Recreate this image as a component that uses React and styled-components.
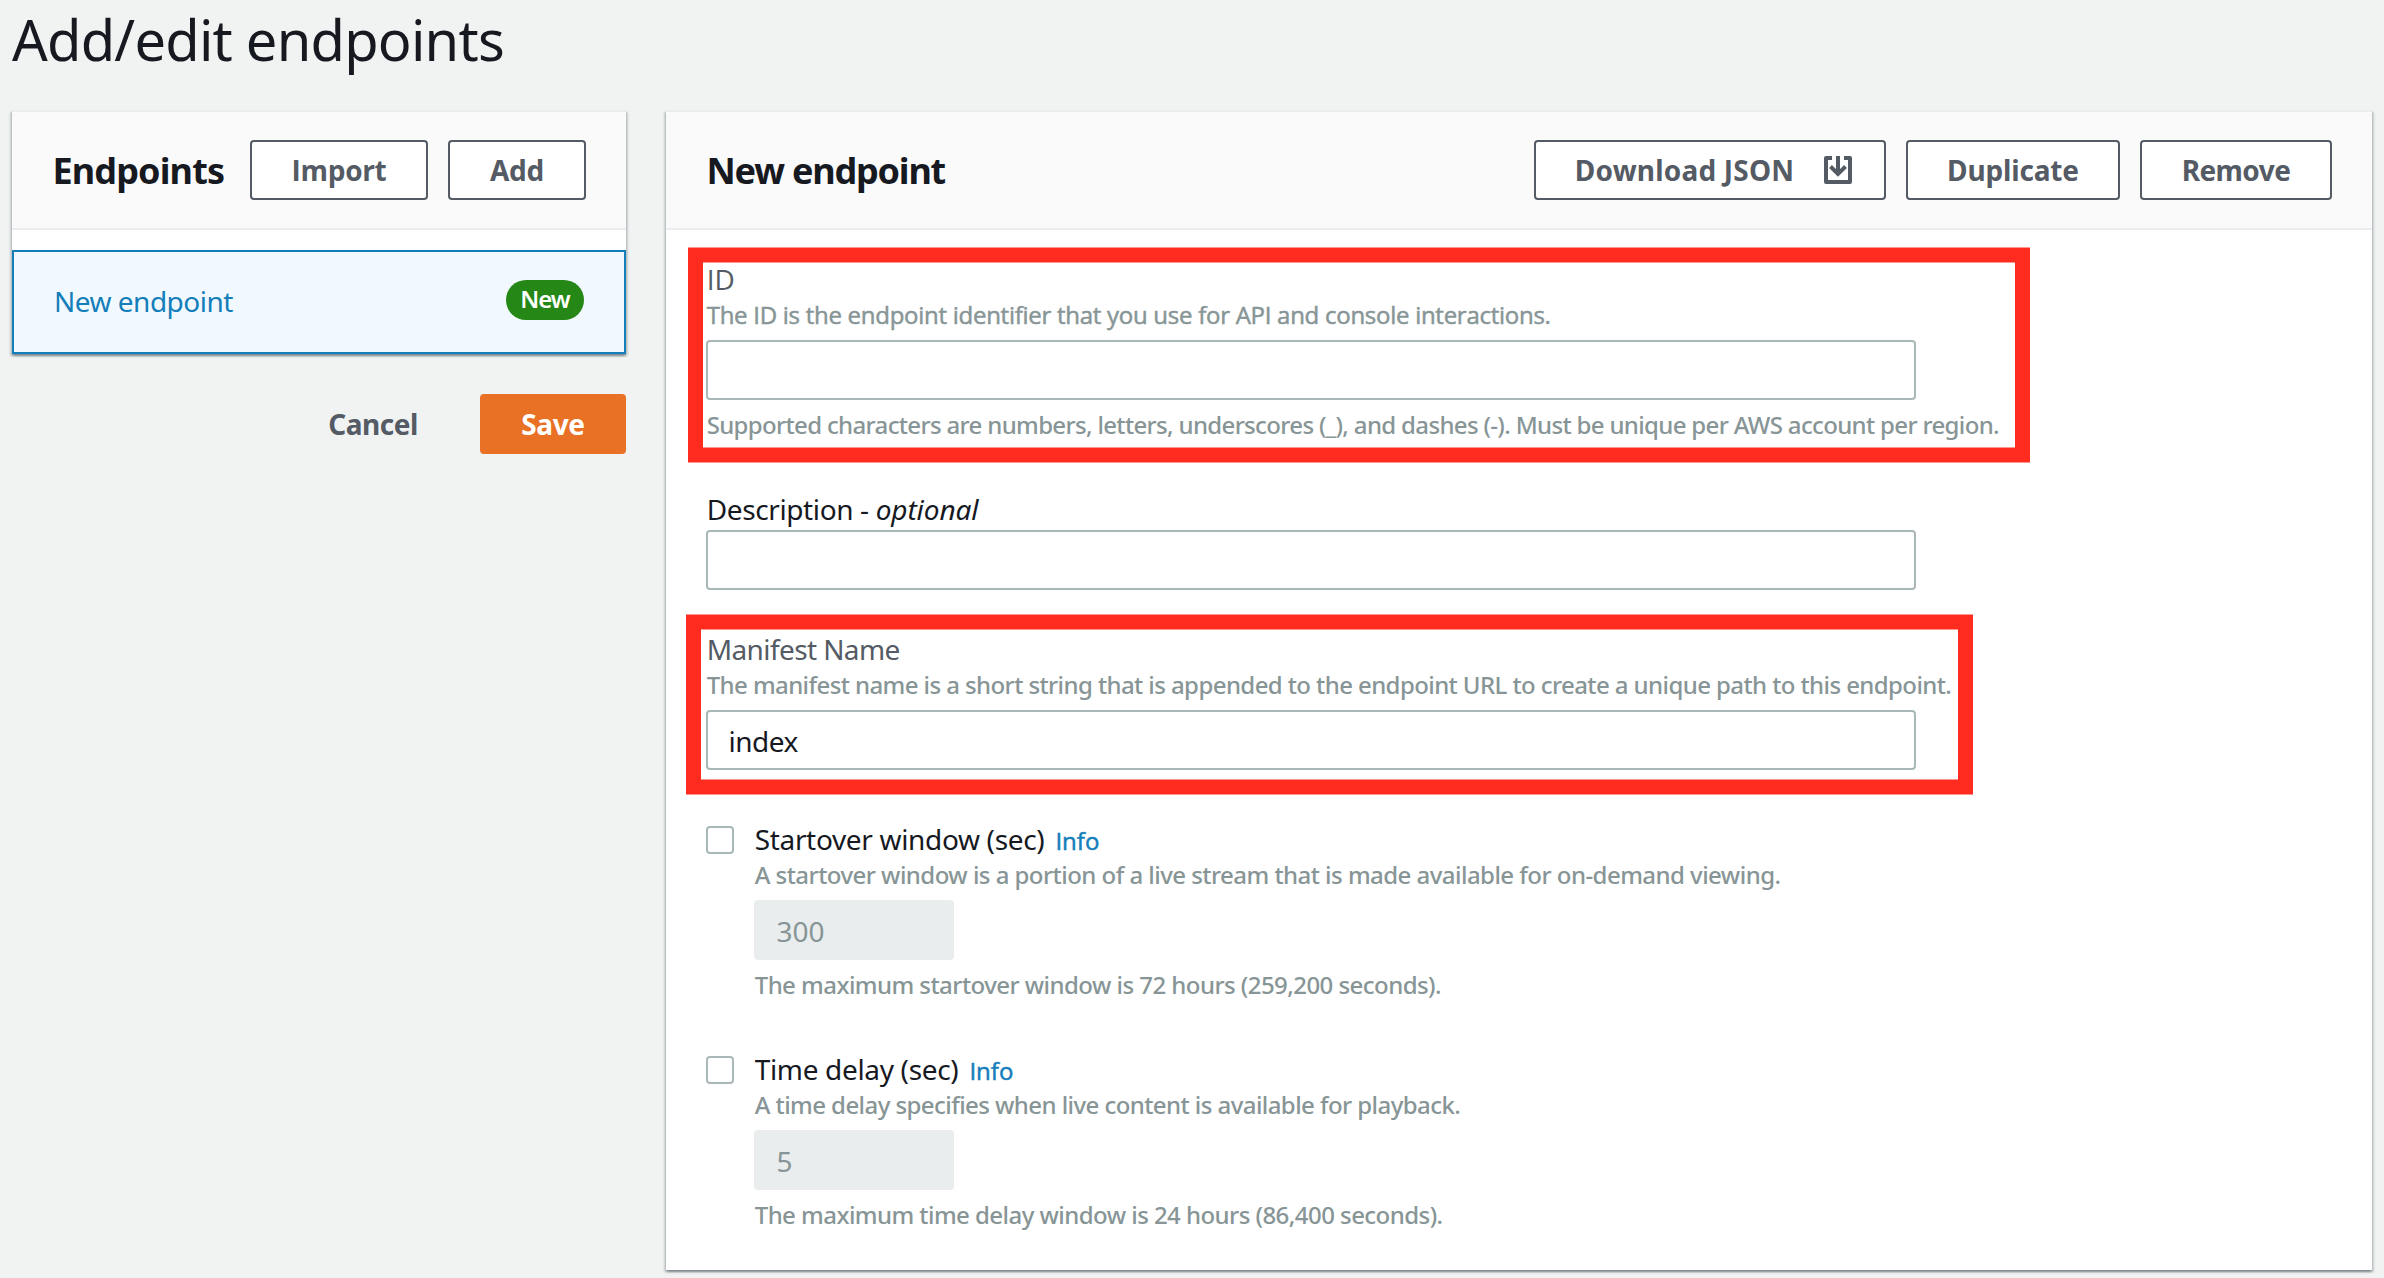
import React from 'react';
import styled, { createGlobalStyle } from 'styled-components';

const GlobalStyle = createGlobalStyle`
  * { box-sizing: border-box; }
  body {
    margin: 0;
    background: #f1f3f3;
    color: #16191f;
    font-family: "Noto Sans", "Open Sans", sans-serif;
    font-size: 28px;
    line-height: 40px;
  }
`;

const Page = styled.div`
  height: 1278px;
  padding: 0 12px;
  overflow: hidden;
`;

const Text = styled.span`
  white-space: pre;
  letter-spacing: ${(p) => p.$ls || 0}px;
  ${(p) => p.$open && 'font-family: "Open Sans", sans-serif;'}
  ${(p) => p.$medium && '-webkit-text-stroke: 0.5px currentColor;'}
`;

const PageTitle = styled.h1`
  margin: 0;
  height: 110px;
  padding-top: 3px;
  font-size: 56px;
  line-height: 72px;
  font-weight: 400;
`;

const Columns = styled.div`
  display: flex;
  align-items: flex-start;
  gap: 40px;
`;

const Sidebar = styled.div`
  width: 614px;
`;

const Panel = styled.section`
  background: #fff;
  box-shadow:
    0 2px 2px 0 rgba(0, 28, 36, 0.3),
    2px 2px 2px 0 rgba(0, 28, 36, 0.15),
    -2px 2px 2px 0 rgba(0, 28, 36, 0.15);
`;

const MainPanel = styled(Panel)`
  flex: 1;
  height: 1160px;
`;

const PanelHeader = styled.header`
  display: flex;
  align-items: center;
  justify-content: space-between;
  height: 120px;
  padding: 0 40px;
  background: #fafafa;
  border-top: 2px solid #eaeded;
  border-bottom: 2px solid #eaeded;
`;

const Heading = styled.h2`
  margin: 0;
  padding: 1px 0 0 0.5px;
  font-size: 36px;
  line-height: 44px;
  font-weight: 700;
`;

const Actions = styled.div`
  display: flex;
  gap: 20px;
`;

const variants = {
  normal: { bg: '#fff', fg: '#545b64', line: '#545b64' },
  link: { bg: 'transparent', fg: '#545b64', line: 'transparent' },
  primary: { bg: '#e97126', fg: '#fff', line: '#e97126' },
};

const Button = styled.button`
  display: flex;
  align-items: center;
  justify-content: center;
  gap: 30px;
  width: ${(p) => p.$w}px;
  height: 60px;
  padding: 0 0 0 ${(p) => p.$padLeft || 0}px;
  border: 2px solid ${(p) => variants[p.$kind || 'normal'].line};
  border-radius: 4px;
  background: ${(p) => variants[p.$kind || 'normal'].bg};
  color: ${(p) => variants[p.$kind || 'normal'].fg};
  font: inherit;
  font-weight: 700;
`;

const IconSvg = styled.svg`
  display: block;
  width: 28px;
  height: 28px;
`;

const EndpointItem = styled.div`
  display: flex;
  align-items: flex-start;
  justify-content: space-between;
  height: 104px;
  margin-top: 20px;
  padding: 28px 40px 0;
  border: 2px solid #147eba;
  background: #f1f9ff;
  color: #147eba;
`;

const ItemName = styled.div`
  padding-top: 1px;
`;

const Badge = styled.div`
  width: 78px;
  height: 40px;
  border-radius: 20px;
  background: #258816;
  color: #fff;
  text-align: center;
  font-size: 24px;
  line-height: 38px;
  font-weight: 600;
`;

const FormActions = styled.div`
  display: flex;
  justify-content: flex-end;
  gap: 20px;
  margin-top: 40px;
`;

const Form = styled.div`
  display: flex;
  flex-direction: column;
  padding: 29px 40px 0;
`;

const Field = styled.div`
  position: relative;
  margin-bottom: ${(p) => p.$gap || 0}px;
`;

const Highlight = styled.div`
  position: absolute;
  left: ${(p) => p.$x}px;
  top: ${(p) => p.$y}px;
  width: ${(p) => p.$w}px;
  height: ${(p) => p.$h}px;
  border: solid #fe2b1e;
  border-width: 14px 15px;
  box-shadow:
    0 1px 0 rgba(254, 43, 30, 0.5),
    0 -1px 0 rgba(254, 43, 30, 0.5),
    inset 0 1px 0 rgba(254, 43, 30, 0.5),
    inset 0 -1px 0 rgba(254, 43, 30, 0.5);
  pointer-events: none;
`;

const Label = styled.div`
  height: 40px;
  padding-left: 0.7px;
  color: ${(p) => (p.$muted ? '#545b64' : '#16191f')};
`;

const Hint = styled.div`
  height: 32px;
  padding-left: 0.7px;
  color: #879596;
  font-size: 24px;
  line-height: 32px;
  font-weight: 500;
`;

const Input = styled.input`
  display: block;
  width: ${(p) => p.$w || 1210}px;
  height: 60px;
  margin: ${(p) => (p.$flush ? 1 : 9)}px 0 ${(p) => (p.$after ? 9 : 0)}px;
  padding: 2px 20px 0 20.5px;
  border: 2px solid #aab7b8;
  border-radius: 4px;
  outline: none;
  background: #fff;
  color: #16191f;
  font: inherit;
  letter-spacing: -0.5px;
  &:disabled {
    border-color: #e9eded;
    background: #e9eded;
    color: #879596;
    letter-spacing: 0;
  }
`;

const CheckField = styled.div`
  display: grid;
  grid-template-columns: 28px 1fr;
  column-gap: 20px;
  margin-bottom: ${(p) => p.$gap || 0}px;
`;

const Checkbox = styled.input`
  appearance: none;
  width: 28px;
  height: 28px;
  margin: 7px 0 0;
  border: 2px solid #aab7b8;
  border-radius: 4px;
  background: #fff;
`;

const InfoLink = styled.a`
  margin-left: 11px;
  color: #147eba;
  font-size: 24px;
`;

const DownloadIcon = () => (
  <IconSvg viewBox="0 0 28 28" fill="none" stroke="#545b64" strokeWidth="4">
    <path d="M8 2H2v24h24V2h-6" strokeLinejoin="round" />
    <path d="M14 0v18" />
    <path d="M6.5 10.5l7.5 7.5 7.5-7.5" />
  </IconSvg>
);

const OptionField = ({ label, hint, hintLs, value, note, gap }) => (
  <CheckField $gap={gap}>
    <Checkbox type="checkbox" />
    <div>
      <Label>
        <Text $ls={-0.33}>{label}</Text>
        <InfoLink><Text $open $medium>Info</Text></InfoLink>
      </Label>
      <Hint><Text $ls={hintLs}>{hint}</Text></Hint>
      <Input $w={200} $after disabled defaultValue={value} />
      <Hint><Text $ls={-0.55}>{note}</Text></Hint>
    </div>
  </CheckField>
);

export default function App() {
  return (
    <Page>
      <GlobalStyle />
      <PageTitle><Text $ls={-0.77}>Add/edit endpoints</Text></PageTitle>
      <Columns>
        <Sidebar>
          <Panel>
            <PanelHeader>
              <Heading><Text $ls={-0.87}>Endpoints</Text></Heading>
              <Actions>
                <Button $w={178}><Text $open $ls={-0.3}>Import</Text></Button>
                <Button $w={138}><Text $ls={-0.2}>Add</Text></Button>
              </Actions>
            </PanelHeader>
            <EndpointItem>
              <ItemName><Text $ls={-0.5}>New endpoint</Text></ItemName>
              <Badge><Text $ls={-1}>New</Text></Badge>
            </EndpointItem>
          </Panel>
          <FormActions>
            <Button $w={174} $kind="link"><Text $ls={-0.5}>Cancel</Text></Button>
            <Button $w={146} $kind="primary"><Text $ls={-0.4}>Save</Text></Button>
          </FormActions>
        </Sidebar>
        <MainPanel>
          <PanelHeader>
            <Heading><Text $ls={-1.2}>New endpoint</Text></Heading>
            <Actions>
              <Button $w={352} $padLeft={7}><Text $ls={0.2}>Download JSON</Text><DownloadIcon /></Button>
              <Button $w={214}><Text $ls={-0.15}>Duplicate</Text></Button>
              <Button $w={192}><Text $ls={-0.55}>Remove</Text></Button>
            </Actions>
          </PanelHeader>
          <Form>
            <Field $gap={48}>
              <Label $muted><Text $open>ID</Text></Label>
              <Hint><Text $open $medium $ls={-0.27}>The ID is the endpoint identifier that you use for API and console interactions.</Text></Hint>
              <Input $after />
              <Hint><Text $ls={-0.66}>Supported characters are numbers, letters, underscores (_), and dashes (-). Must be unique per AWS account per region.</Text></Hint>
              <Highlight $x={-18} $y={-11} $w={1342} $h={214} />
            </Field>
            <Field $gap={39}>
              <Label><Text $ls={-0.38}>Description - </Text><em><Text $ls={-0.1}>optional</Text></em></Label>
              <Input $flush />
            </Field>
            <Field $gap={49}>
              <Label $muted><Text $ls={-0.6}>Manifest Name</Text></Label>
              <Hint><Text $ls={-0.59}>The manifest name is a short string that is appended to the endpoint URL to create a unique path to this endpoint.</Text></Hint>
              <Input defaultValue="index" />
              <Highlight $x={-20} $y={-14} $w={1287} $h={179} />
            </Field>
            <OptionField
              label="Startover window (sec)"
              hint="A startover window is a portion of a live stream that is made available for on-demand viewing."
              hintLs={-0.54}
              value="300"
              note="The maximum startover window is 72 hours (259,200 seconds)."
              gap={48}
            />
            <OptionField
              label="Time delay (sec)"
              hint="A time delay specifies when live content is available for playback."
              hintLs={-0.57}
              value="5"
              note="The maximum time delay window is 24 hours (86,400 seconds)."
            />
          </Form>
        </MainPanel>
      </Columns>
    </Page>
  );
}
